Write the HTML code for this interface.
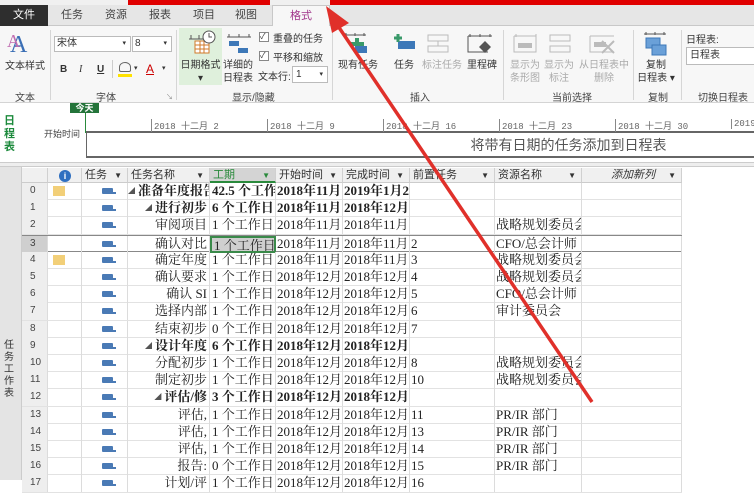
<!DOCTYPE html>
<html><head><meta charset="utf-8"><style>
*{margin:0;padding:0;box-sizing:border-box}
body{width:754px;height:480px;overflow:hidden;background:#fff;font-family:"Liberation Sans","Noto Sans CJK SC",sans-serif;font-size:11px;color:#333;position:relative}
.abs{position:absolute}
.tab{position:absolute;top:5px;height:21px;line-height:21px;font-size:11px;color:#444;text-align:center}
.rb{position:absolute;font-size:10px;color:#333;text-align:center;line-height:13px}
.gray{color:#aaa}
.sep{position:absolute;top:30px;width:1px;height:70px;background:#d6d6d6}
.grp{position:absolute;top:89px;font-size:10px;color:#444}
.row{position:absolute;left:22px;width:660px;height:17.2px;border-bottom:1px solid #e2e2e2;font-family:"Liberation Serif","Noto Serif CJK SC",serif;font-size:13px;line-height:16px;color:#222}
.row div{position:absolute;top:0;height:17px;overflow:hidden;white-space:nowrap;border-right:1px solid #dcdcdc}
.c0{left:0;width:26px;background:#eeeeee;font-family:"Liberation Sans",sans-serif;font-size:10px;color:#444;padding-left:8px}
.c1{left:26px;width:34px}
.c2{left:60px;width:46px}
.c3{left:106px;width:82px;text-align:right;padding-right:2px}
.c4{left:188px;width:66px;padding-left:2px}
.c5{left:254px;width:67px;padding-left:1px}
.c6{left:321px;width:67px;padding-left:1px}
.c7{left:388px;width:85px;padding-left:1px}
.c8{left:473px;width:87px;padding-left:1px}
.c9{left:560px;width:100px}
.b{font-weight:bold}
.t{font-size:7px;color:#555;font-weight:normal;vertical-align:2px;margin-right:3px}
.mi{position:absolute;left:20px;top:5px;width:11px;height:6px;background:#4a7ab5;border-radius:1px}
.mi:after{content:"";position:absolute;left:8px;top:4px;width:6px;height:2px;background:#4a7ab5}
.hd{position:absolute;top:168px;height:15px;background:#f0f0f0;border-bottom:1px solid #ccc;border-right:1px solid #d0d0d0;font-size:11px;line-height:15px;color:#333;padding-left:3px}
.hd i{position:absolute;right:5px;top:0;font-style:normal;font-size:8px}
.dt{position:absolute;top:119px;font-size:9px;color:#666;font-family:'Liberation Mono','Noto Sans CJK SC',monospace;white-space:nowrap;border-left:1px solid #888;padding-left:2px}
</style></head><body>
<div class="abs" style="left:0;top:0;width:754px;height:5px;background:#f0f0f0"></div>
<div class="abs" style="left:128px;top:0;width:142px;height:5px;background:#e00000"></div>
<div class="abs" style="left:330px;top:0;width:424px;height:5px;background:#e00000"></div>
<div class="abs" style="left:0;top:5px;width:754px;height:21px;background:#e6e6e6;border-bottom:1px solid #c8c8c8"></div>
<div class="tab" style="left:0;width:48px;background:#2e2e2e;color:#fff">文件</div>
<div class="tab" style="left:52px;width:40px">任务</div>
<div class="tab" style="left:96px;width:40px">资源</div>
<div class="tab" style="left:140px;width:40px">报表</div>
<div class="tab" style="left:184px;width:40px">项目</div>
<div class="tab" style="left:226px;width:40px">视图</div>
<div class="tab" style="left:272px;width:58px;background:#f7f7f7;color:#a0358a;border:1px solid #c8c8c8;border-bottom:none;height:22px">格式</div>
<div class="abs" style="left:0;top:26px;width:754px;height:77px;background:#f7f7f7;border-bottom:1px solid #d4d4d4"></div>
<div class="abs" style="left:10px;top:32px;font-size:24px;color:#3b6fb5;font-family:'Liberation Serif',serif">A</div>
<div class="abs" style="left:7px;top:31px;font-size:18px;color:#c06db0;font-family:'Liberation Serif',serif">A</div>
<div class="rb" style="left:3px;top:60px;width:44px">文本样式</div>
<div class="grp" style="left:15px">文本</div>
<div class="sep" style="left:50px"></div>
<div class="abs" style="left:54px;top:36px;width:77px;height:16px;background:#fff;border:1px solid #bbb;font-size:10px;line-height:14px;padding-left:2px">宋体<span style="position:absolute;right:4px;font-size:7px">▾</span></div>
<div class="abs" style="left:132px;top:36px;width:40px;height:16px;background:#fff;border:1px solid #bbb;font-size:10px;line-height:14px;padding-left:2px">8<span style="position:absolute;right:4px;font-size:7px">▾</span></div>
<div class="abs" style="left:60px;top:64px;font-size:10px;font-weight:bold">B</div>
<div class="abs" style="left:79px;top:64px;font-size:10px;font-style:italic;font-family:'Liberation Serif',serif">I</div>
<div class="abs" style="left:97px;top:64px;font-size:10px;text-decoration:underline;font-weight:bold">U</div>
<div class="abs" style="left:112px;top:60px;width:1px;height:18px;background:#ccc"></div>
<div class="abs" style="left:119px;top:62px;width:12px;height:10px;border:1px solid #666;border-radius:50% 50% 2px 2px"></div>
<div class="abs" style="left:118px;top:74px;width:14px;height:3px;background:#ffe200"></div>
<div class="abs" style="left:134px;top:64px;font-size:7px">▾</div>
<div class="abs" style="left:146px;top:62px;font-size:12px;color:#c00;text-decoration:underline;">A</div>
<div class="abs" style="left:162px;top:64px;font-size:7px">▾</div>
<div class="grp" style="left:96px">字体</div>
<div class="abs" style="left:166px;top:92px;font-size:7px;color:#888">↘</div>
<div class="sep" style="left:176px"></div>
<div class="abs" style="left:179px;top:28px;width:43px;height:57px;background:#dff0dc"></div>
<svg class="abs" style="left:187px;top:29px" width="30" height="26"><path d="M2 10h20M4 6v4M12 6v4M20 6v4" stroke="#555" fill="none"/><rect x="8" y="12" width="14" height="12" fill="#fff" stroke="#d07a2a"/><path d="M8 16h14M8 20h14M13 12v12M17 12v12" stroke="#d07a2a"/><circle cx="22" cy="8" r="6" fill="#fff" stroke="#555"/><path d="M22 4v4h3" stroke="#555" fill="none"/></svg>
<div class="rb" style="left:179px;top:59px;width:43px">日期格式<br>▾</div>
<svg class="abs" style="left:226px;top:33px" width="26" height="22"><path d="M1 4h24M3 1v3M13 1v3M23 1v3" stroke="#555" fill="none"/><rect x="3" y="8" width="10" height="5" fill="#3d78b8"/><rect x="12" y="15" width="10" height="5" fill="#3d78b8"/></svg>
<div class="rb" style="left:223px;top:59px;width:32px;text-align:left">详细的<br>日程表</div>
<div class="abs" style="left:259px;top:32px;width:10px;height:10px;border:1px solid #888;background:#fff;font-size:8px;line-height:8px">✓</div>
<div class="abs" style="left:273px;top:30px;font-size:10px">重叠的任务</div>
<div class="abs" style="left:259px;top:51px;width:10px;height:10px;border:1px solid #888;background:#fff;font-size:8px;line-height:8px">✓</div>
<div class="abs" style="left:273px;top:49px;font-size:10px">平移和缩放</div>
<div class="abs" style="left:258px;top:68px;font-size:10px">文本行:</div>
<div class="abs" style="left:292px;top:66px;width:36px;height:17px;background:#fff;border:1px solid #bbb;font-size:10px;line-height:15px;padding-left:3px">1<span style="position:absolute;right:4px;font-size:7px">▾</span></div>
<div class="grp" style="left:232px">显示/隐藏</div>
<div class="sep" style="left:332px"></div>
<svg class="abs" style="left:343px;top:32px" width="26" height="24"><path d="M1 3h22M3 1v3M12 1v3M21 1v3" stroke="#555" fill="none"/><path d="M7 10h5v-4h4v4h5v4h-5v4h-4v-4h-5z" fill="#3a9a6a"/><rect x="12" y="14" width="12" height="7" fill="#3d78b8"/></svg>
<div class="rb" style="left:336px;top:59px;width:44px">现有任务</div>
<svg class="abs" style="left:392px;top:32px" width="24" height="20"><rect x="6" y="9" width="17" height="8" fill="#3d78b8"/><path d="M2 6h8M6 2v8" stroke="#3a9a6a" stroke-width="3"/></svg>
<div class="rb" style="left:392px;top:59px;width:24px">任务</div>
<svg class="abs" style="left:426px;top:33px" width="24" height="22"><rect x="2" y="2" width="20" height="6" fill="none" stroke="#bbb"/><rect x="2" y="13" width="20" height="6" fill="none" stroke="#bbb"/><path d="M12 8v5" stroke="#bbb"/></svg>
<div class="rb gray" style="left:421px;top:59px;width:42px">标注任务</div>
<svg class="abs" style="left:466px;top:33px" width="28" height="26"><path d="M2 3h24M4 1v3M14 1v3M24 1v3M2 3v16h20" stroke="#555" fill="none"/><path d="M19 8l6 6-6 6-6-6z" fill="#555"/></svg>
<div class="rb" style="left:464px;top:59px;width:36px">里程碑</div>
<div class="grp" style="left:410px">插入</div>
<div class="sep" style="left:503px"></div>
<svg class="abs" style="left:512px;top:33px" width="26" height="22"><path d="M2 3h22M4 1v3M24 1v3M2 3v16h22v-16" stroke="#bbb" fill="none"/><rect x="6" y="10" width="14" height="5" fill="#bbb"/></svg>
<div class="rb gray" style="left:508px;top:59px;width:34px">显示为<br>条形图</div>
<svg class="abs" style="left:548px;top:33px" width="24" height="22"><rect x="2" y="2" width="20" height="6" fill="none" stroke="#bbb"/><rect x="2" y="13" width="20" height="6" fill="none" stroke="#bbb"/></svg>
<div class="rb gray" style="left:542px;top:59px;width:34px">显示为<br>标注</div>
<svg class="abs" style="left:588px;top:33px" width="28" height="24"><path d="M2 3h24M2 3v16h22" stroke="#bbb" fill="none"/><rect x="6" y="9" width="12" height="5" fill="#bbb"/><path d="M14 8l12 12M26 8l-12 12" stroke="#bbb" stroke-width="2"/></svg>
<div class="rb gray" style="left:578px;top:59px;width:52px">从日程表中<br>删除</div>
<div class="grp" style="left:552px">当前选择</div>
<div class="sep" style="left:633px"></div>
<svg class="abs" style="left:643px;top:31px" width="26" height="26"><path d="M1 3h22M3 1v3M12 1v3M21 1v3" stroke="#555" fill="none"/><rect x="3" y="7" width="14" height="10" fill="#6aa0d8" stroke="#3d78b8"/><rect x="9" y="14" width="14" height="10" fill="#6aa0d8" stroke="#3d78b8"/></svg>
<div class="rb" style="left:636px;top:59px;width:40px">复制<br>日程表 ▾</div>
<div class="grp" style="left:648px">复制</div>
<div class="sep" style="left:681px"></div>
<div class="abs" style="left:686px;top:31px;font-size:10px">日程表:</div>
<div class="abs" style="left:686px;top:47px;width:70px;height:18px;background:#fff;border:1px solid #bbb;font-size:10px;line-height:16px;padding-left:3px">日程表</div>
<div class="grp" style="left:698px">切换日程表</div>
<div class="abs" style="left:4px;top:115px;width:14px;font-size:11px;line-height:13px;color:#1c8a3c;font-weight:bold">日<br>程<br>表</div>
<div class="abs" style="left:70px;top:103px;width:29px;height:10px;background:#24743a;color:#fff;font-size:9px;line-height:10px;text-align:center;font-weight:bold">今天</div>
<div class="abs" style="left:85px;top:113px;width:1px;height:20px;background:#2a8a3c"></div>
<div class="abs" style="left:44px;top:127px;font-size:9px;color:#444">开始时间</div>
<div class="abs" style="left:86px;top:131px;width:668px;height:27px;border-top:2px solid #666;border-bottom:2px solid #666;border-left:1px solid #666;font-size:14px;color:#555;text-align:center;line-height:24px;padding-left:296px">将带有日期的任务添加到日程表</div>
<div class="dt" style="left:151px">2018 十二月 2</div>
<div class="dt" style="left:267px">2018 十二月 9</div>
<div class="dt" style="left:383px">2018 十二月 16</div>
<div class="dt" style="left:499px">2018 十二月 23</div>
<div class="dt" style="left:615px">2018 十二月 30</div>
<div class="dt" style="left:731px">2019</div>
<div class="abs" style="left:0;top:162px;width:754px;height:5px;background:#eee;border-top:1px solid #ccc;border-bottom:1px solid #ccc"></div>
<div class="abs" style="left:0;top:167px;width:22px;height:313px;background:#e4e4e4;border-right:1px solid #ccc"></div>
<div class="abs" style="left:4px;top:340px;width:14px;font-size:10px;line-height:12px;color:#333">任<br>务<br>工<br>作<br>表</div>
<div class="hd" style="left:22px;width:26px"></div>
<div class="hd" style="left:48px;width:34px"><span style="position:absolute;left:11px;top:2px;width:12px;height:12px;border-radius:50%;background:#2f6fc0;color:#fff;font-size:9px;line-height:12px;text-align:center;font-weight:bold">i</span></div>
<div class="hd" style="left:82px;width:46px">任务<i>▼</i></div>
<div class="hd" style="left:128px;width:82px">任务名称<i>▼</i></div>
<div class="hd" style="left:210px;width:66px;background:#d4d4d4;color:#2a8a3c;border-bottom:2px solid #2a8a3c">工期<i>▼</i></div>
<div class="hd" style="left:276px;width:67px">开始时间<i>▼</i></div>
<div class="hd" style="left:343px;width:67px">完成时间<i>▼</i></div>
<div class="hd" style="left:410px;width:85px">前置任务<i>▼</i></div>
<div class="hd" style="left:495px;width:87px">资源名称<i>▼</i></div>
<div class="hd" style="left:582px;width:100px;text-align:center;font-style:italic">添加新列<i>▼</i></div>

<div class="row" style="top:183px"><div class="c0">0</div><div class="c1"><span style="position:absolute;left:5px;top:3px;width:12px;height:10px;background:#f2cf78"></span></div><div class="c2"><span class="mi"></span></div><div class="c3 b"><span class="t">◢</span>准备年度报告</div><div class="c4 b">42.5 个工作日</div><div class="c5 b">2018年11月</div><div class="c6 b">2019年1月2</div><div class="c7"></div><div class="c8"></div><div class="c9"></div></div>
<div class="row" style="top:200.2px"><div class="c0">1</div><div class="c1"></div><div class="c2"><span class="mi"></span></div><div class="c3 b"><span class="t">◢</span>进行初步</div><div class="c4 b">6 个工作日</div><div class="c5 b">2018年11月</div><div class="c6 b">2018年12月</div><div class="c7"></div><div class="c8"></div><div class="c9"></div></div>
<div class="row" style="top:217.4px"><div class="c0">2</div><div class="c1"></div><div class="c2"><span class="mi"></span></div><div class="c3">审阅项目</div><div class="c4">1 个工作日</div><div class="c5">2018年11月</div><div class="c6">2018年11月</div><div class="c7"></div><div class="c8">战略规划委员会</div><div class="c9"></div></div>
<div class="row" style="top:234.6px;border-top:1px solid #888;border-bottom:1px solid #888"><div class="c0" style="background:#cfcfcf">3</div><div class="c1"></div><div class="c2"><span class="mi"></span></div><div class="c3">确认对比</div><div class="c4" style="background:#cfcfcf;border:2px solid #3a8a4a">1 个工作日</div><div class="c5">2018年11月</div><div class="c6">2018年11月</div><div class="c7">2</div><div class="c8">CFO/总会计师</div><div class="c9"></div></div>
<div class="row" style="top:251.8px"><div class="c0">4</div><div class="c1"><span style="position:absolute;left:5px;top:3px;width:12px;height:10px;background:#f2cf78"></span></div><div class="c2"><span class="mi"></span></div><div class="c3">确定年度</div><div class="c4">1 个工作日</div><div class="c5">2018年11月</div><div class="c6">2018年11月</div><div class="c7">3</div><div class="c8">战略规划委员会</div><div class="c9"></div></div>
<div class="row" style="top:269px"><div class="c0">5</div><div class="c1"></div><div class="c2"><span class="mi"></span></div><div class="c3">确认要求</div><div class="c4">1 个工作日</div><div class="c5">2018年12月</div><div class="c6">2018年12月</div><div class="c7">4</div><div class="c8">战略规划委员会</div><div class="c9"></div></div>
<div class="row" style="top:286.2px"><div class="c0">6</div><div class="c1"></div><div class="c2"><span class="mi"></span></div><div class="c3">确认 SI</div><div class="c4">1 个工作日</div><div class="c5">2018年12月</div><div class="c6">2018年12月</div><div class="c7">5</div><div class="c8">CFO/总会计师</div><div class="c9"></div></div>
<div class="row" style="top:303.4px"><div class="c0">7</div><div class="c1"></div><div class="c2"><span class="mi"></span></div><div class="c3">选择内部</div><div class="c4">1 个工作日</div><div class="c5">2018年12月</div><div class="c6">2018年12月</div><div class="c7">6</div><div class="c8">审计委员会</div><div class="c9"></div></div>
<div class="row" style="top:320.6px"><div class="c0">8</div><div class="c1"></div><div class="c2"><span class="mi"></span></div><div class="c3">结束初步</div><div class="c4">0 个工作日</div><div class="c5">2018年12月</div><div class="c6">2018年12月</div><div class="c7">7</div><div class="c8"></div><div class="c9"></div></div>
<div class="row" style="top:337.8px"><div class="c0">9</div><div class="c1"></div><div class="c2"><span class="mi"></span></div><div class="c3 b"><span class="t">◢</span>设计年度</div><div class="c4 b">6 个工作日</div><div class="c5 b">2018年12月</div><div class="c6 b">2018年12月</div><div class="c7"></div><div class="c8"></div><div class="c9"></div></div>
<div class="row" style="top:355px"><div class="c0">10</div><div class="c1"></div><div class="c2"><span class="mi"></span></div><div class="c3">分配初步</div><div class="c4">1 个工作日</div><div class="c5">2018年12月</div><div class="c6">2018年12月</div><div class="c7">8</div><div class="c8">战略规划委员会</div><div class="c9"></div></div>
<div class="row" style="top:372.2px"><div class="c0">11</div><div class="c1"></div><div class="c2"><span class="mi"></span></div><div class="c3">制定初步</div><div class="c4">1 个工作日</div><div class="c5">2018年12月</div><div class="c6">2018年12月</div><div class="c7">10</div><div class="c8">战略规划委员会</div><div class="c9"></div></div>
<div class="row" style="top:389.4px"><div class="c0">12</div><div class="c1"></div><div class="c2"><span class="mi"></span></div><div class="c3 b"><span class="t">◢</span>评估/修</div><div class="c4 b">3 个工作日</div><div class="c5 b">2018年12月</div><div class="c6 b">2018年12月</div><div class="c7"></div><div class="c8"></div><div class="c9"></div></div>
<div class="row" style="top:406.6px"><div class="c0">13</div><div class="c1"></div><div class="c2"><span class="mi"></span></div><div class="c3">评估,</div><div class="c4">1 个工作日</div><div class="c5">2018年12月</div><div class="c6">2018年12月</div><div class="c7">11</div><div class="c8">PR/IR 部门</div><div class="c9"></div></div>
<div class="row" style="top:423.8px"><div class="c0">14</div><div class="c1"></div><div class="c2"><span class="mi"></span></div><div class="c3">评估,</div><div class="c4">1 个工作日</div><div class="c5">2018年12月</div><div class="c6">2018年12月</div><div class="c7">13</div><div class="c8">PR/IR 部门</div><div class="c9"></div></div>
<div class="row" style="top:441px"><div class="c0">15</div><div class="c1"></div><div class="c2"><span class="mi"></span></div><div class="c3">评估,</div><div class="c4">1 个工作日</div><div class="c5">2018年12月</div><div class="c6">2018年12月</div><div class="c7">14</div><div class="c8">PR/IR 部门</div><div class="c9"></div></div>
<div class="row" style="top:458.2px"><div class="c0">16</div><div class="c1"></div><div class="c2"><span class="mi"></span></div><div class="c3">报告:</div><div class="c4">0 个工作日</div><div class="c5">2018年12月</div><div class="c6">2018年12月</div><div class="c7">15</div><div class="c8">PR/IR 部门</div><div class="c9"></div></div>
<div class="row" style="top:475.4px"><div class="c0">17</div><div class="c1"></div><div class="c2"><span class="mi"></span></div><div class="c3">计划/评</div><div class="c4">1 个工作日</div><div class="c5">2018年12月</div><div class="c6">2018年12月</div><div class="c7">16</div><div class="c8"></div><div class="c9"></div></div>
<svg class="abs" style="left:0;top:0" width="754" height="480"><line x1="592" y1="402" x2="338" y2="26" stroke="#e0302a" stroke-width="3.5"/><polygon points="326,6 349,23 332,33" fill="#e0302a"/></svg>
</body></html>
